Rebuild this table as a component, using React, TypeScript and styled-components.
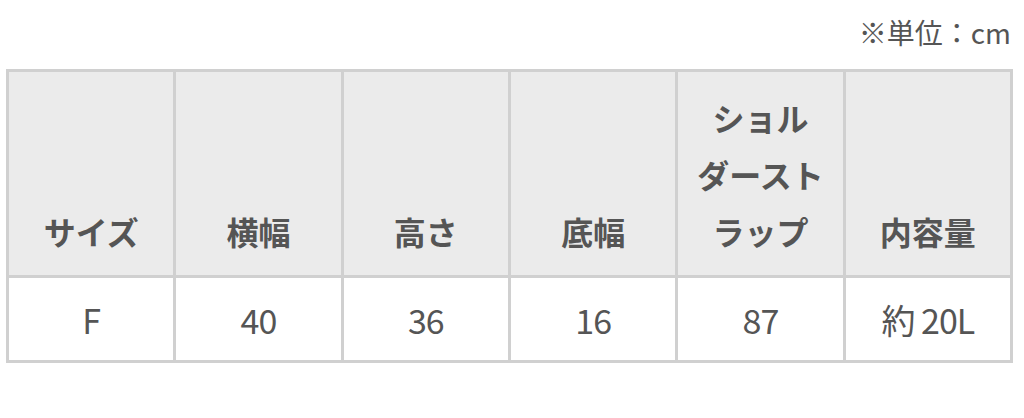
import React from "react";
import styled, { createGlobalStyle } from "styled-components";

const Global = createGlobalStyle`
  html, body { margin: 0; padding: 0; background: #fff; }
  body { font-family: "Noto Sans CJK JP", "Noto Sans", sans-serif; color: #555; }
`;

const Page = styled.div`
  padding: 12px 13px 0 6px;
  display: flex;
  flex-direction: column;
`;

const Unit = styled.div`
  align-self: flex-end;
  font-size: 28px;
  line-height: 40px;
  color: #555;
  margin-bottom: 17px;
`;

const Table = styled.table`
  width: 1007px;
  table-layout: fixed;
  border-collapse: collapse;
  border: 3px solid #d0d0d0;
`;

const HeadCell = styled.th`
  background: #ebebeb;
  border: 3px solid #d0d0d0;
  padding: 17px 0 15px;
  font-size: 32px;
  line-height: 57px;
  font-weight: 700;
  color: #555;
  vertical-align: bottom;
  text-align: center;
`;

const BodyCell = styled.td`
  border: 3px solid #d0d0d0;
  height: 82px;
  padding: 0;
  font-size: 34px;
  font-weight: 400;
  color: #555;
  text-align: center;
  vertical-align: middle;
  letter-spacing: -1px;
`;

const heads = ["サイズ", "横幅", "高さ", "底幅", "ショル\nダースト\nラップ", "内容量"];
const values = ["F", "40", "36", "16", "87", "約 20L"];

export default function App() {
  return (
    <>
      <Global />
      <Page>
        <Unit>※単位：cm</Unit>
        <Table>
          <thead>
            <tr>
              {heads.map((h) => (
                <HeadCell key={h}>
                  {h.split("\n").map((line, i) => (
                    <div key={i}>{line}</div>
                  ))}
                </HeadCell>
              ))}
            </tr>
          </thead>
          <tbody>
            <tr>
              {values.map((v) => (
                <BodyCell key={v}>{v}</BodyCell>
              ))}
            </tr>
          </tbody>
        </Table>
      </Page>
    </>
  );
}
